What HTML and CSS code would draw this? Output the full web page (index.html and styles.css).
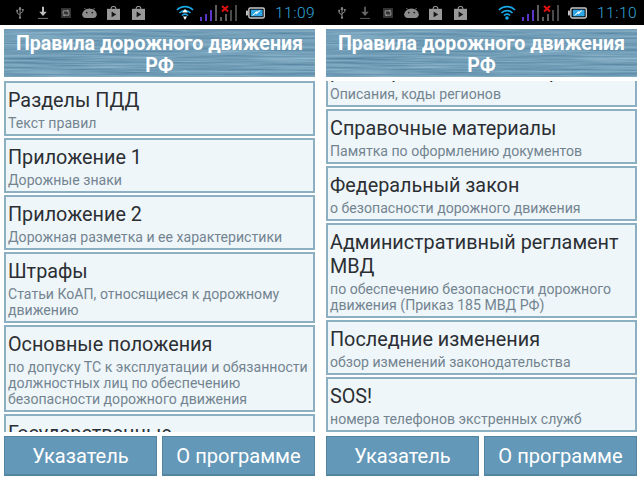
FILE: index.html
```html
<!DOCTYPE html>
<html lang="ru">
<head>
<meta charset="utf-8">
<title>Правила дорожного движения РФ</title>
<link rel="stylesheet" href="styles.css">
</head>
<body>
<svg class="defs" width="0" height="0" aria-hidden="true">
  <defs>
    <filter id="brush" x="0" y="0" width="100%" height="100%" color-interpolation-filters="sRGB">
      <feTurbulence type="fractalNoise" baseFrequency="0.012 0.45" numOctaves="3" seed="7"/>
      <feColorMatrix values=".32 0 0 0 .29  .28 0 0 0 .48  .24 0 0 0 .6  0 0 0 0 1"/>
    </filter>
    <symbol id="i-usb" viewBox="0 0 14 18"><path d="M7 1v15M7 1 5.500 4h3zM7 12 3 9V6M7 10l4-3V5" fill="none" stroke="#8a8a8a" stroke-width="1.400"/><circle cx="7" cy="15.500" r="1.600" fill="#8a8a8a"/><rect x="1.800" y="4.500" width="2.400" height="2.400" fill="#8a8a8a"/><rect x="9.800" y="3.500" width="2.400" height="2" fill="#8a8a8a"/></symbol>
    <symbol id="i-sync" viewBox="0 0 14 14"><rect width="14" height="14" fill="#333"/><path d="M3 9V4h7M11 5v5H4" fill="none" stroke="#a0a0a0" stroke-width="1.300"/><path d="M9 2l2.500 2L9 6zM5 8 2.500 10 5 12z" fill="#a0a0a0"/></symbol>
    <symbol id="i-android" viewBox="0 0 16 11"><path d="M0 7a8 6.500 0 0 1 16 0 4 4 0 0 1-4 4H4a4 4 0 0 1-4-4z" fill="#8c8c8c"/><path d="M3.500 1.500 2.500 0M12.500 1.500 13.500 0" stroke="#8c8c8c"/><circle cx="5" cy="5" r="1" fill="#222"/><circle cx="11" cy="5" r="1" fill="#222"/></symbol>
    <symbol id="i-bag" viewBox="0 0 14 15"><rect y="3" width="14" height="12" fill="#999"/><path d="M4.500 4V2.500a2.500 2 0 0 1 5 0V4" fill="none" stroke="#999" stroke-width="1.200"/><path d="M5 6v6l5-3z" fill="#161616"/></symbol>
    <symbol id="i-signal" viewBox="0 0 17 16"><rect x="0" y="12" width="2" height="4" fill="#5a35c8"/><rect x="5" y="9" width="2" height="7" fill="#5a35c8"/><rect x="10" y="5" width="2" height="11" fill="#5a35c8"/><rect x="15" y="0" width="2" height="16" fill="#5c5c5c"/></symbol>
    <symbol id="i-nosignal" viewBox="0 0 18 16"><rect x="0" y="12" width="2" height="4" fill="#5c5c5c"/><rect x="5" y="9" width="2" height="7" fill="#5c5c5c"/><rect x="10" y="5" width="2" height="11" fill="#4a4a4a"/><rect x="15" y="0" width="2" height="16" fill="#4a4a4a"/><path d="M2 1l6 5.500M8 1 2 6.500" stroke="#e01010" stroke-width="2"/></symbol>
    <symbol id="i-batt" viewBox="0 0 20 12"><rect x="3" y=".75" width="16.250" height="10.500" rx="1.500" fill="#000" stroke="#c8c8c8" stroke-width="1.500"/><rect x="0" y="3.500" width="2" height="5" fill="#c8c8c8"/><rect x="5" y="2.500" width="12.500" height="7" fill="#2fa6e6"/><path d="M7 8.500 11 5.500V7l3.500-3.500L11 5.500V4.500z" fill="#fff" stroke="#fff" stroke-width=".7"/></symbol>
  </defs>
</svg>

<main class="screen">
  <div class="status">
    <div class="status-left">
      <svg class="ic ic-usb"><use href="#i-usb"/></svg>
      <svg class="ic ic-dl" viewBox="0 0 12 15"><path d="M6 0v7" stroke="#bdbdbd" stroke-width="2.400"/><path d="M1.500 6h9L6 11z" fill="#bdbdbd"/><path d="M0 14h12" stroke="#8a8a8a"/></svg>
      <svg class="ic ic-sync"><use href="#i-sync"/></svg>
      <svg class="ic ic-android"><use href="#i-android"/></svg>
      <svg class="ic ic-bag"><use href="#i-bag"/></svg>
      <svg class="ic ic-bag"><use href="#i-bag"/></svg>
    </div>
    <div class="status-right">
      <svg class="ic ic-wifi" viewBox="0 0 18 16"><path d="M1 5a11 11 0 0 1 16 0M3.500 8a7.500 7.500 0 0 1 11 0M6 10.500a4 4 0 0 1 6 0" fill="none" stroke="#19a8e8" stroke-width="1.700"/><path d="M6 7.500h6L9 4z" fill="#fff"/><path d="M7 11.500h4L9 15z" fill="#fff"/></svg>
      <svg class="ic ic-signal"><use href="#i-signal"/></svg>
      <svg class="ic ic-nosignal"><use href="#i-nosignal"/></svg>
      <svg class="ic ic-batt"><use href="#i-batt"/></svg>
      <span class="clock">11:09</span>
    </div>
  </div>
  <div class="app">
    <h1 class="title"><svg class="brush" aria-hidden="true"><rect width="100%" height="100%" filter="url(#brush)"/></svg><span class="title-text">Правила дорожного движения РФ</span></h1>
    <div class="list">
      <div class="list-inner">
        <a class="card"><b class="card-title">Разделы ПДД</b><span class="card-sub">Текст правил</span></a>
        <a class="card"><b class="card-title">Приложение 1</b><span class="card-sub">Дорожные знаки</span></a>
        <a class="card"><b class="card-title">Приложение 2</b><span class="card-sub">Дорожная разметка и ее характеристики</span></a>
        <a class="card"><b class="card-title">Штрафы</b><span class="card-sub">Статьи КоАП, относящиеся к дорожному движению</span></a>
        <a class="card"><b class="card-title">Основные положения</b><span class="card-sub">по допуску ТС к эксплуатации и обязанности должностных лиц по обеспечению безопасности дорожного движения</span></a>
        <a class="card"><b class="card-title">Государственные регистрационные номера</b><span class="card-sub">Описания, коды регионов</span></a>
      </div>
    </div>
    <div class="buttons">
      <a class="btn">Указатель</a>
      <a class="btn">О программе</a>
    </div>
  </div>
</main>

<main class="screen">
  <div class="status">
    <div class="status-left">
      <svg class="ic ic-usb"><use href="#i-usb"/></svg>
      <svg class="ic ic-dl" viewBox="0 0 12 15"><path d="M6 0v7" stroke="#555" stroke-width="2.400"/><path d="M1.500 6h9L6 11z" fill="#666"/><path d="M0 14h12" stroke="#666"/></svg>
      <svg class="ic ic-sync"><use href="#i-sync"/></svg>
      <svg class="ic ic-android"><use href="#i-android"/></svg>
      <svg class="ic ic-bag"><use href="#i-bag"/></svg>
      <svg class="ic ic-bag"><use href="#i-bag"/></svg>
    </div>
    <div class="status-right">
      <svg class="ic ic-wifi" viewBox="0 0 18 16"><path d="M1 5a11 11 0 0 1 16 0M3.500 8a7.500 7.500 0 0 1 11 0M6 10.500a4 4 0 0 1 6 0" fill="none" stroke="#19a8e8" stroke-width="1.700"/><circle cx="9" cy="13" r="1.800" fill="#19a8e8"/></svg>
      <svg class="ic ic-signal"><use href="#i-signal"/></svg>
      <svg class="ic ic-nosignal"><use href="#i-nosignal"/></svg>
      <svg class="ic ic-batt"><use href="#i-batt"/></svg>
      <span class="clock">11:10</span>
    </div>
  </div>
  <div class="app">
    <h1 class="title"><svg class="brush" aria-hidden="true"><rect width="100%" height="100%" filter="url(#brush)"/></svg><span class="title-text">Правила дорожного движения РФ</span></h1>
    <div class="list">
      <div class="list-inner scrolled">
        <a class="card"><b class="card-title">Государственные регистрационные номера</b><span class="card-sub">Описания, коды регионов</span></a>
        <a class="card"><b class="card-title">Справочные материалы</b><span class="card-sub">Памятка по оформлению документов</span></a>
        <a class="card"><b class="card-title">Федеральный закон</b><span class="card-sub">о безопасности дорожного движения</span></a>
        <a class="card"><b class="card-title">Административный регламент МВД</b><span class="card-sub">по обеспечению безопасности дорожного движения (Приказ 185 МВД РФ)</span></a>
        <a class="card"><b class="card-title">Последние изменения</b><span class="card-sub">обзор изменений законодательства</span></a>
        <a class="card"><b class="card-title">SOS!</b><span class="card-sub">номера телефонов экстренных служб</span></a>
      </div>
    </div>
    <div class="buttons">
      <a class="btn">Указатель</a>
      <a class="btn">О программе</a>
    </div>
  </div>
</main>
</body>
</html>
```
FILE: styles.css
```css
* { box-sizing: border-box; }
html, body { margin: 0; height: 480px; overflow: hidden; background: #fff; }
body { display: flex; width: 644px; font-family: Roboto, "Noto Sans", sans-serif; }
.defs { position: absolute; }
.screen { width: 322px; height: 480px; display: flex; flex-direction: column; }

.status { height: 25px; background: #000; display: flex; justify-content: space-between; align-items: center; padding: 0 8px 0 15px; }
.status-left, .status-right { display: flex; align-items: center; }
.ic { display: block; flex: none; }
.ic-usb { width: 10px; height: 14px; margin-right: 13px; }
.ic-dl { width: 10px; height: 14px; margin-right: 13px; }
.ic-sync { width: 10px; height: 10px; margin-right: 11px; }
.ic-android { width: 15px; height: 10px; margin-right: 10px; }
.ic-bag { width: 13px; height: 14px; margin-right: 12px; }
.ic-bag:last-child { margin-right: 0; }
.ic-wifi { width: 18px; height: 16px; margin-right: 6px; }
.ic-signal { width: 17px; height: 16px; margin-right: 3px; }
.ic-nosignal { width: 18px; height: 16px; margin-right: 8px; }
.ic-batt { width: 19px; height: 12px; margin-right: 10px; }
.clock { font-size: 15.5px; font-weight: 300; letter-spacing: .5px; color: #2fa8de; width: 39px; white-space: nowrap; }

.app { flex: 1; min-height: 0; display: flex; flex-direction: column; gap: 4px; padding: 4px 7px 4px 4px; }
.title { position: relative; flex: none; margin: 0; height: 48px; padding: 3px 8px 0; font-size: 19.6px; line-height: 22px; font-weight: 700; color: #fff; text-align: center; display: flex; align-items: center; justify-content: center; background: #72a0b9; }
.brush { position: absolute; inset: 0; width: 100%; height: 100%; }
.title-text { position: relative; }

.list { flex: 1; min-height: 0; overflow: hidden; }
.list-inner { display: flex; flex-direction: column; gap: 2px; }
.list-inner.scrolled { margin-top: -53px; }
.card { display: block; background: #eff6fa; border: 2px solid #8cb0c2; padding: 6px 2px 3px; }
.card-title { display: block; font-weight: 400; font-size: 19.8px; line-height: 24px; color: #2b2f33; }
.card-sub { display: block; margin-top: 2px; font-size: 14.1px; line-height: 16px; color: #738490; }

.buttons { flex: none; display: grid; grid-template-columns: 1fr 1fr; gap: 5px; height: 40px; }
.btn { display: flex; align-items: center; justify-content: center; background: #6398b8; border: 1px solid #54849f; border-bottom-width: 2px; color: #fff; font-size: 20.1px; line-height: 24px; }
```
